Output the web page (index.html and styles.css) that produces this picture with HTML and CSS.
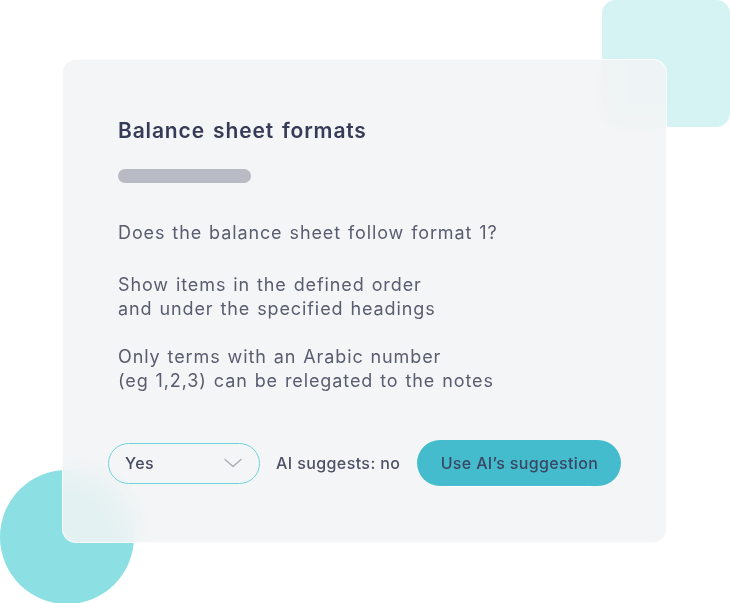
FILE: index.html
```html
<!DOCTYPE html>
<html lang="en">
<head>
<meta charset="utf-8">
<title>Balance sheet formats</title>
<link rel="stylesheet" href="styles.css">
</head>
<body>
<div class="stage">
  <div class="deco-square"></div>
  <div class="deco-circle"></div>
  <section class="card">
    <h1 class="title">Balance sheet formats</h1>
    <div class="bar"></div>
    <p class="question">Does the balance sheet follow format 1?</p>
    <p class="note">Show items in the defined order<br>and under the specified headings</p>
    <p class="note note-last">Only terms with an Arabic number<br>(eg 1,2,3) can be relegated to the notes</p>
    <div class="actions">
      <div class="select">
        <span class="select-value">Yes</span>
        <svg class="chevron" width="18" height="10" viewBox="0 0 18 10"><path d="M1 1.5 L9 8.5 L17 1.5" fill="none" stroke="#a9abb3" stroke-width="1.4" stroke-linecap="round" stroke-linejoin="round"/></svg>
      </div>
      <span class="suggest">AI suggests: no</span>
      <button class="use-btn">Use AI’s suggestion</button>
    </div>
  </section>
</div>
</body>
</html>
```
FILE: styles.css
```css
* { box-sizing: border-box; }
html, body { margin: 0; padding: 0; background: #ffffff; }
body { font-family: Inter, "Noto Sans", sans-serif; }
.stage {
  position: relative;
  width: 730px;
  height: 603px;
  overflow: hidden;
  padding-top: 59px;
  padding-left: 62px;
}
.deco-square {
  position: absolute;
  left: 602px;
  top: 0;
  width: 128px;
  height: 127px;
  border-radius: 14px;
  background: #d5f3f3;
}
.deco-circle {
  position: absolute;
  left: 0;
  top: 470px;
  width: 134px;
  height: 134px;
  border-radius: 50%;
  background: #8ce0e3;
}
.card {
  position: relative;
  width: 605px;
  height: 484px;
  border-radius: 14px;
  background: rgba(242, 243, 245, 0.86);
  backdrop-filter: blur(14px);
  -webkit-backdrop-filter: blur(14px);
  border: 1px solid rgba(255, 255, 255, 0.7);
  padding: 58px 40px 0 55px;
}
.title {
  margin: 0;
  font-size: 21px;
  line-height: 25px;
  font-weight: 600;
  color: #363c57;
  letter-spacing: 0.85px;
  word-spacing: 2px;
}
.bar {
  margin-top: 26px;
  width: 133px;
  height: 14px;
  border-radius: 7px;
  background: #b8bac4;
}
.question, .note {
  margin: 0;
  font-size: 18px;
  line-height: 24px;
  color: #585d70;
  font-weight: 400;
  letter-spacing: 0.9px;
  word-spacing: 1px;
}
.question { margin-top: 38px; }
.note { margin-top: 28px; }
.note-last { margin-top: 24px; }
.actions {
  display: flex;
  align-items: center;
  margin-top: 47px;
  margin-left: -10px;
}
.select {
  width: 152px;
  height: 41px;
  border: 1.5px solid #6fd4da;
  border-radius: 21px;
  display: flex;
  align-items: center;
  justify-content: space-between;
  padding: 0 17px 0 16px;
}
.select-value {
  font-size: 16px;
  font-weight: 500;
  color: #454a60;
  letter-spacing: 0.4px;
}
.chevron { display: block; }
.suggest {
  margin-left: 16px;
  font-size: 16px;
  font-weight: 500;
  color: #4c5165;
  letter-spacing: 0.4px;
}
.use-btn {
  position: relative;
  margin-left: 17px;
  height: 46px;
  width: 204px;
  border: none;
  border-radius: 23px;
  background: #45bccd;
  font-family: inherit;
  font-size: 16px;
  font-weight: 500;
  color: #3a4662;
  letter-spacing: 0.35px;
  padding: 0;
}
.use-btn::after {
  content: "";
  position: absolute;
  left: 23px;
  right: 30px;
  bottom: -1px;
  height: 1px;
  background: rgba(255, 255, 255, 0.9);
}
```
